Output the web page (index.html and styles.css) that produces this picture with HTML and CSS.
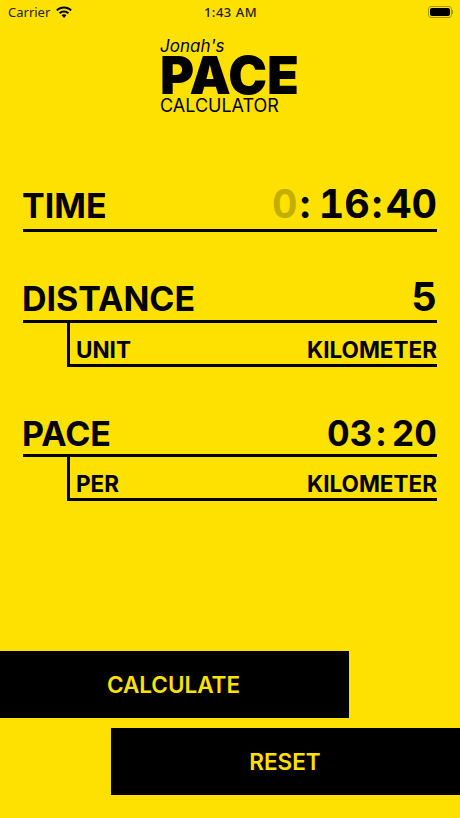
FILE: index.html
```html
<!DOCTYPE html>
<html lang="en">
<head>
    <meta charset="UTF-8">
    <meta name="viewport" content="width=device-width, initial-scale=1.0">
    <title>Pace Calculator</title>
    <link rel="stylesheet" href="styles.css">
</head>
<body>

    <!-- Status bar -->
    <div class="status-bar">
        <div class="status-left">
            <span>Carrier</span>
            <svg class="wifi" width="18" height="13" viewBox="0 0 18 13">
                <path d="M9 2.600c2.500 0 4.800 1 6.500 2.600l1.300-1.400C14.700 1.800 12 .6 9 .6S3.300 1.800 1.200 3.800l1.300 1.400C4.200 3.600 6.500 2.600 9 2.600z"/>
                <path d="M9 6.400c1.500 0 2.800.6 3.800 1.500l1.300-1.400C12.800 5.200 11 4.500 9 4.500s-3.800.7-5.100 2l1.300 1.400c1-.9 2.300-1.500 3.800-1.500z"/>
                <path d="M9 8.300c-1 0-1.800.4-2.400 1L9 12l2.400-2.700c-.6-.6-1.400-1-2.400-1z"/>
            </svg>
        </div>
        <div class="status-time">1:43 AM</div>
        <div class="status-right">
            <div class="battery"><div class="battery-fill"></div></div>
            <div class="battery-cap"></div>
        </div>
    </div>

    <!-- Logo -->
    <div class="logo">
        <div class="logo-name">Jonah's</div>
        <div class="logo-pace">PACE</div>
        <div class="logo-calc">CALCULATOR</div>
    </div>

    <!-- Fields -->
    <div class="fields">
        <div class="field field-time">
            <div class="row">
                <span class="label">TIME</span>
                <span class="value"><span class="dim">0</span><span class="colon colon-wide">:</span>16<span class="colon colon-last">:</span>40</span>
            </div>
        </div>

        <div class="field field-distance">
            <div class="row">
                <span class="label">DISTANCE</span>
                <span class="value">5</span>
            </div>
            <div class="sub-row">
                <span>UNIT</span>
                <span>KILOMETER</span>
            </div>
        </div>

        <div class="field field-pace">
            <div class="row">
                <span class="label">PACE</span>
                <span class="value value-small">03<span class="colon">:</span>20</span>
            </div>
            <div class="sub-row">
                <span>PER</span>
                <span>KILOMETER</span>
            </div>
        </div>
    </div>

    <!-- Buttons -->
    <div class="actions">
        <button class="btn btn-calculate">CALCULATE</button>
        <button class="btn btn-reset">RESET</button>
    </div>

</body>
</html>
```

FILE: styles.css
```css
/* Base */
html, body {
    height: 100%;
}

body {
    font-family: Inter, "Liberation Sans", sans-serif;
    background-color: #ffe100;
    color: #000;
    margin: 0;
    display: flex;
    flex-direction: column;
    overflow: hidden;
}

/* Status bar */
.status-bar {
    display: grid;
    grid-template-columns: 1fr auto 1fr;
    align-items: center;
    height: 24px;
    padding: 0 7px 0 8px;
    font-family: "Noto Sans", Inter, sans-serif;
    font-size: 13px;
    color: #222;
}

.status-left {
    display: flex;
    align-items: center;
    gap: 5px;
}

.wifi {
    fill: #000;
}

.status-time {
    font-weight: 500;
    letter-spacing: 0.5px;
}

.status-right {
    display: flex;
    align-items: center;
    justify-content: flex-end;
}

.battery {
    width: 24px;
    height: 12px;
    box-sizing: border-box;
    border: 1px solid #a99500;
    border-radius: 3px;
    padding: 1px;
}

.battery-fill {
    height: 100%;
    background-color: #000;
    border-radius: 2px;
}

.battery-cap {
    width: 1px;
    height: 4px;
    background-color: #a99500;
}

/* Logo */
.logo {
    margin-top: 13px;
    padding-left: 160px;
}

.logo-name {
    font-size: 17px;
    font-style: italic;
    line-height: 18px;
}

.logo-pace {
    font-size: 52px;
    font-weight: 900;
    line-height: 42px;
}

.logo-calc {
    font-size: 18px;
    line-height: 18px;
}

/* Fields */
.fields {
    padding: 0 23px;
}

.field-time {
    margin-top: 70px;
}

.field-distance {
    margin-top: 44px;
}

.field-pace {
    margin-top: 43px;
}

.row {
    display: flex;
    justify-content: space-between;
    align-items: baseline;
    box-sizing: border-box;
    border-bottom: 3px solid #000;
    height: 47px;
}

.field-distance .row {
    padding-top: 2px;
}

.field-pace .row {
    padding-top: 4px;
}

.label {
    font-size: 34px;
    font-weight: 700;
    line-height: 38px;
    margin-left: -1px;
}

.value {
    font-size: 39.5px;
    font-weight: 700;
    line-height: 38px;
    font-variant-numeric: tabular-nums;
}

.value-small {
    font-size: 35px;
}

.dim {
    color: #c4ae00;
}

.colon {
    padding: 0 2px;
}

.colon-wide {
    padding-right: 8.5px;
}

.colon-last {
    padding-right: 3.5px;
}

.value-small .colon {
    padding: 0 6px 0 4px;
}

.sub-row {
    display: flex;
    justify-content: space-between;
    align-items: flex-end;
    height: 41px;
    margin-left: 44px;
    border-left: 3px solid #000;
    border-bottom: 3px solid #000;
    padding-left: 6px;
    font-size: 22.5px;
    font-weight: 700;
    line-height: 28px;
}

/* Buttons */
.actions {
    margin-top: auto;
    margin-bottom: 23px;
    display: flex;
    flex-direction: column;
    gap: 10.67px;
}

.btn {
    width: 349px;
    height: 66.67px;
    padding: 0;
    border: none;
    background-color: #000;
    color: #ffe100;
    font-family: inherit;
    font-size: 22.5px;
    font-weight: 600;
}

.btn-calculate {
    padding-right: 2px;
}

.btn-reset {
    align-self: flex-end;
    padding-right: 1px;
}
```
